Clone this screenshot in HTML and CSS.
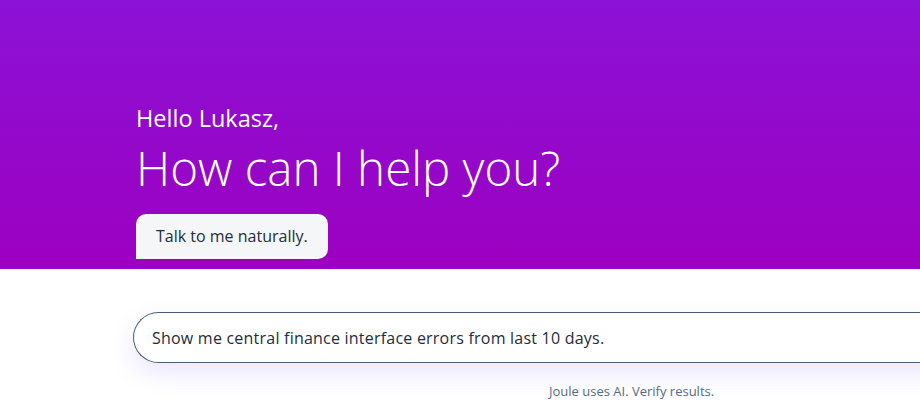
FILE: index.html
```html
<!DOCTYPE html>
<html lang="en">
<head>
<meta charset="utf-8">
<title>Joule</title>
<link rel="stylesheet" href="styles.css">
</head>
<body>
<header class="hero">
  <div class="hero-inner">
    <p class="hello">Hello Lukasz,</p>
    <h1 class="title">How can I help you?</h1>
    <div class="chip">Talk to me naturally.</div>
  </div>
</header>
<main class="composer">
  <div class="input-box">Show me central finance interface errors from last 10 days.</div>
  <p class="disclaimer">Joule uses AI. Verify results.</p>
</main>
</body>
</html>
```
FILE: styles.css
```css
html, body {
  margin: 0;
  padding: 0;
  background: #ffffff;
  overflow: hidden;
}
body {
  width: 920px;
  height: 415px;
  font-family: "Open Sans", "Liberation Sans", sans-serif;
}
.hero {
  height: 269px;
  background: linear-gradient(180deg, #8b12d6 0%, #9d00c0 100%);
  box-sizing: border-box;
  padding: 103px 0 0 136px;
}
.hero-inner {
  display: flex;
  flex-direction: column;
  align-items: flex-start;
}
.hello {
  margin: 0;
  color: #ffffff;
  font-weight: 400;
  font-size: 23.5px;
  line-height: 30px;
}
.title {
  margin: 3px 0 0 0;
  color: #ffffff;
  font-weight: 300;
  font-size: 47.5px;
  line-height: 64px;
}
.chip {
  margin-top: 14px;
  background: #f5f6f7;
  color: #1d2d3e;
  font-size: 16px;
  line-height: 45px;
  height: 45px;
  padding: 0 20px;
  border-radius: 10px 10px 10px 0;
}
.composer {
  padding: 43px 0 0 133px;
}
.input-box {
  width: 900px;
  height: 51px;
  box-sizing: border-box;
  border: 1px solid #475e75;
  border-right: none;
  border-radius: 26px 0 0 26px;
  padding: 0 0 0 18px;
  display: flex;
  align-items: center;
  font-size: 16px;
  letter-spacing: 0.22px;
  color: #1d2d3e;
  background: #ffffff;
  box-shadow: 0 10px 24px rgba(120, 100, 255, 0.16);
}
.disclaimer {
  margin: 19px 0 0 416px;
  font-size: 13px;
  color: #556b82;
}
```
